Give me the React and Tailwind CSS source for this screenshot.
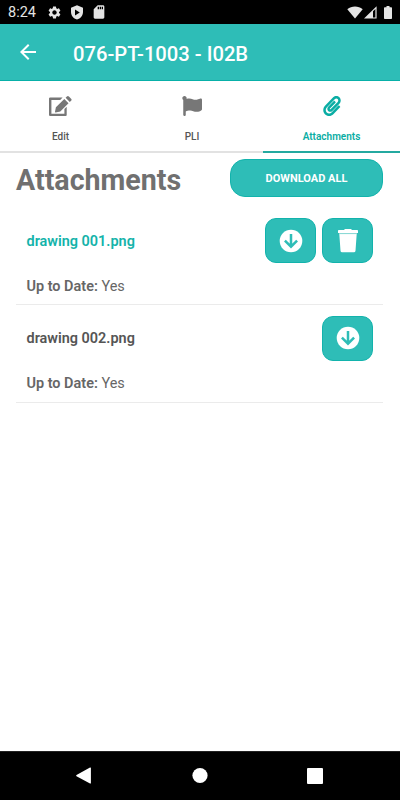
import React, { useState } from 'react'
import { FaFlag, FaPaperclip } from 'react-icons/fa'
import { MdSettings, MdSdCard, MdArrowBack } from 'react-icons/md'

const tabs = [
  { name: 'Edit', icon: EditIcon, width: 'w-[121px]' },
  { name: 'PLI', icon: FaFlag, width: 'w-[142px]' },
  { name: 'Attachments', icon: FaPaperclip, width: 'w-[137px]' },
]

const files = [
  { name: 'drawing 001.png', upToDate: 'Yes', downloaded: true },
  { name: 'drawing 002.png', upToDate: 'Yes', downloaded: false },
]

function StatusBar() {
  return (
    <div className="h-6 shrink-0 bg-black text-[#e4e4e4] flex items-center justify-between pl-2 pr-[8px]">
      <div className="flex items-center">
        <span className="w-[39px] text-[14.500px] leading-6 pt-[2px]">8:24</span>
        <MdSettings className="size-[15px]" />
        <svg viewBox="0 0 12 15" className="w-3 h-[15px] ml-[9px]">
          <path fill="currentColor" fillRule="evenodd" d="M6 .3 0 2.8V7c0 3.6 2.500 6.500 6 7.600 3.500-1.100 6-4 6-7.600V2.800zM4 4.500v6l4.800-3z" />
        </svg>
        <MdSdCard className="size-[16px] ml-[8px]" />
      </div>
      <div className="flex items-center">
        <svg viewBox="0 0 16 13" className="w-4 h-[13px]">
          <path fill="currentColor" d="M8 12.600.300 3.300C2.500 1.300 5.200.400 8 .400s5.500.900 7.700 2.900z" />
        </svg>
        <svg viewBox="0 0 13 13" className="size-[13px] ml-px">
          <path fill="currentColor" fillRule="evenodd" d="M0 12.600 12.600.200v12.400zM9 5.300v6.100h2.400V2.900z" />
        </svg>
        <svg viewBox="0 0 8 13" className="w-2 h-[13px] ml-[7px]">
          <path fill="currentColor" d="M2.500 0h3v1.200H7.200q.8 0 .8.800v10.200q0 .8-.8.800H.8q-.8 0-.8-.8V2q0-.8.8-.8h1.700z" />
        </svg>
      </div>
    </div>
  )
}

function EditIcon({ className }) {
  return (
    <svg viewBox="0 0 23 20" className={className} fill="currentColor">
      <path d="M1.200 1.500H13.600L11.200 3.900H2.400V17.700h13V13l2.300-2.300V19q0 1-1 1H1.200q-1.200 0-1.200-1V2.500q0-1 1.200-1z" />
      <path d="M15.300 3.100 19.500 7.300 11.300 15.500l-4.600.9q-.8.100-.7-.7l.9-4.400zM16.600 1.800l1.300-1.300q1-1 2 0l2.200 2.200q1 1 0 2L20.800 6z" />
    </svg>
  )
}

function DownloadIcon() {
  return (
    <svg viewBox="0 0 24 24" className="size-6">
      <circle cx="12" cy="12" r="11.300" fill="#fff" />
      <path d="M12 5v12.500M5.900 11.600l6.100 6.100 6.100-6.100" fill="none" stroke="#2ebdb7" strokeWidth="2.500" />
    </svg>
  )
}

function TrashIcon() {
  return (
    <svg viewBox="0 0 20 24" className="w-5 h-6">
      <path fill="#fff" d="M0 1.800Q0 1 .8 1H6l.7-.8q.2-.2.500-.2h5.600q.3 0 .5.200L14 1h5.200q.8 0 .8.800V4H0z" />
      <path fill="#fff" d="M1.300 5.100h17.400L17.500 21.700q-.1 1.600-1.700 1.600H4.200q-1.600 0-1.700-1.600z" />
      <path fill="#8bd9d5" d="M1 4h18v1.100H1z" />
    </svg>
  )
}

function IconButton({ label, children }) {
  return (
    <button aria-label={label} className="w-[51px] h-[45px] rounded-[11px] bg-[#2ebdb7] border border-[#12b3ac] flex items-center justify-center">
      {children}
    </button>
  )
}

function FileRow({ file }) {
  return (
    <div className="h-[97.500px] pt-[10.500px] pl-[10.500px] pr-[10px] border-b border-[#ebebeb] text-[14.450px] text-[#666]">
      <div className="h-[45px] flex items-center justify-between">
        <span className={file.downloaded ? 'pt-[2px] font-semibold text-[#14b3aa]' : 'pt-[2px] font-semibold text-[#555]'}>{file.name}</span>
        <div className="flex gap-[6px]">
          <IconButton label="Download"><DownloadIcon /></IconButton>
          {file.downloaded && <IconButton label="Delete"><TrashIcon /></IconButton>}
        </div>
      </div>
      <p className="mt-[12.500px] leading-[22px]"><span className="font-semibold">Up to Date:</span> {file.upToDate}</p>
    </div>
  )
}

export default function App() {
  const [active, setActive] = useState('Attachments')

  return (
    <div className="h-[800px] w-[400px] flex flex-col bg-white font-['Roboto',sans-serif] overflow-hidden">
      <StatusBar />
      <header className="h-[57px] shrink-0 bg-[#2ebdb7] border-b border-[#08b0a8] text-white flex items-center">
        <MdArrowBack className="size-6 ml-4" />
        <h1 className="ml-[33px] pt-[5px] text-[20.200px] font-medium">076-PT-1003 - I02B</h1>
      </header>

      <nav className="h-[72px] shrink-0 flex">
        {tabs.map(({ name, icon: Icon, width }) => (
          <button
            key={name}
            onClick={() => setActive(name)}
            className={`${width} flex flex-col items-center pt-[15px] border-b-2 ${active === name ? 'text-[#0aada4] border-[#24a9a0]' : 'text-[#777] border-[#e2e2e2]'}`}
          >
            <Icon className="h-5 w-auto" />
            <span className={`mt-[13px] text-[10px] leading-4 ${active === name ? 'font-semibold' : 'font-medium text-[#555]'}`}>{name}</span>
          </button>
        ))}
      </nav>

      <main className="flex-1 px-4 pt-[6px] pr-[17px]">
        <div className="h-[38px] flex items-center justify-between">
          <h2 className="text-[28.600px] font-bold text-[#707070] pt-[4px]">Attachments</h2>
          <button className="w-[153px] h-[38px] rounded-[15px] bg-[#2ebdb7] border border-[#12b3ac] text-white text-[11px] font-bold pt-[2px]">DOWNLOAD ALL</button>
        </div>
        <div className="mt-[10.500px]">
          {files.map(file => <FileRow key={file.name} file={file} />)}
        </div>
      </main>

      <footer className="h-[49px] shrink-0 bg-black border-t border-[#222]">
        <svg viewBox="0 0 400 48" className="w-full h-12 fill-white">
          <path d="M76.500 23.100 90 15.500q.9-.4.900.5v15q0 .9-.9.500L76.500 24.300q-.8-.6 0-1.200z" />
          <circle cx="200" cy="23.500" r="7.600" />
          <rect x="307" y="16" width="16" height="16" rx="1" />
        </svg>
      </footer>
    </div>
  )
}
